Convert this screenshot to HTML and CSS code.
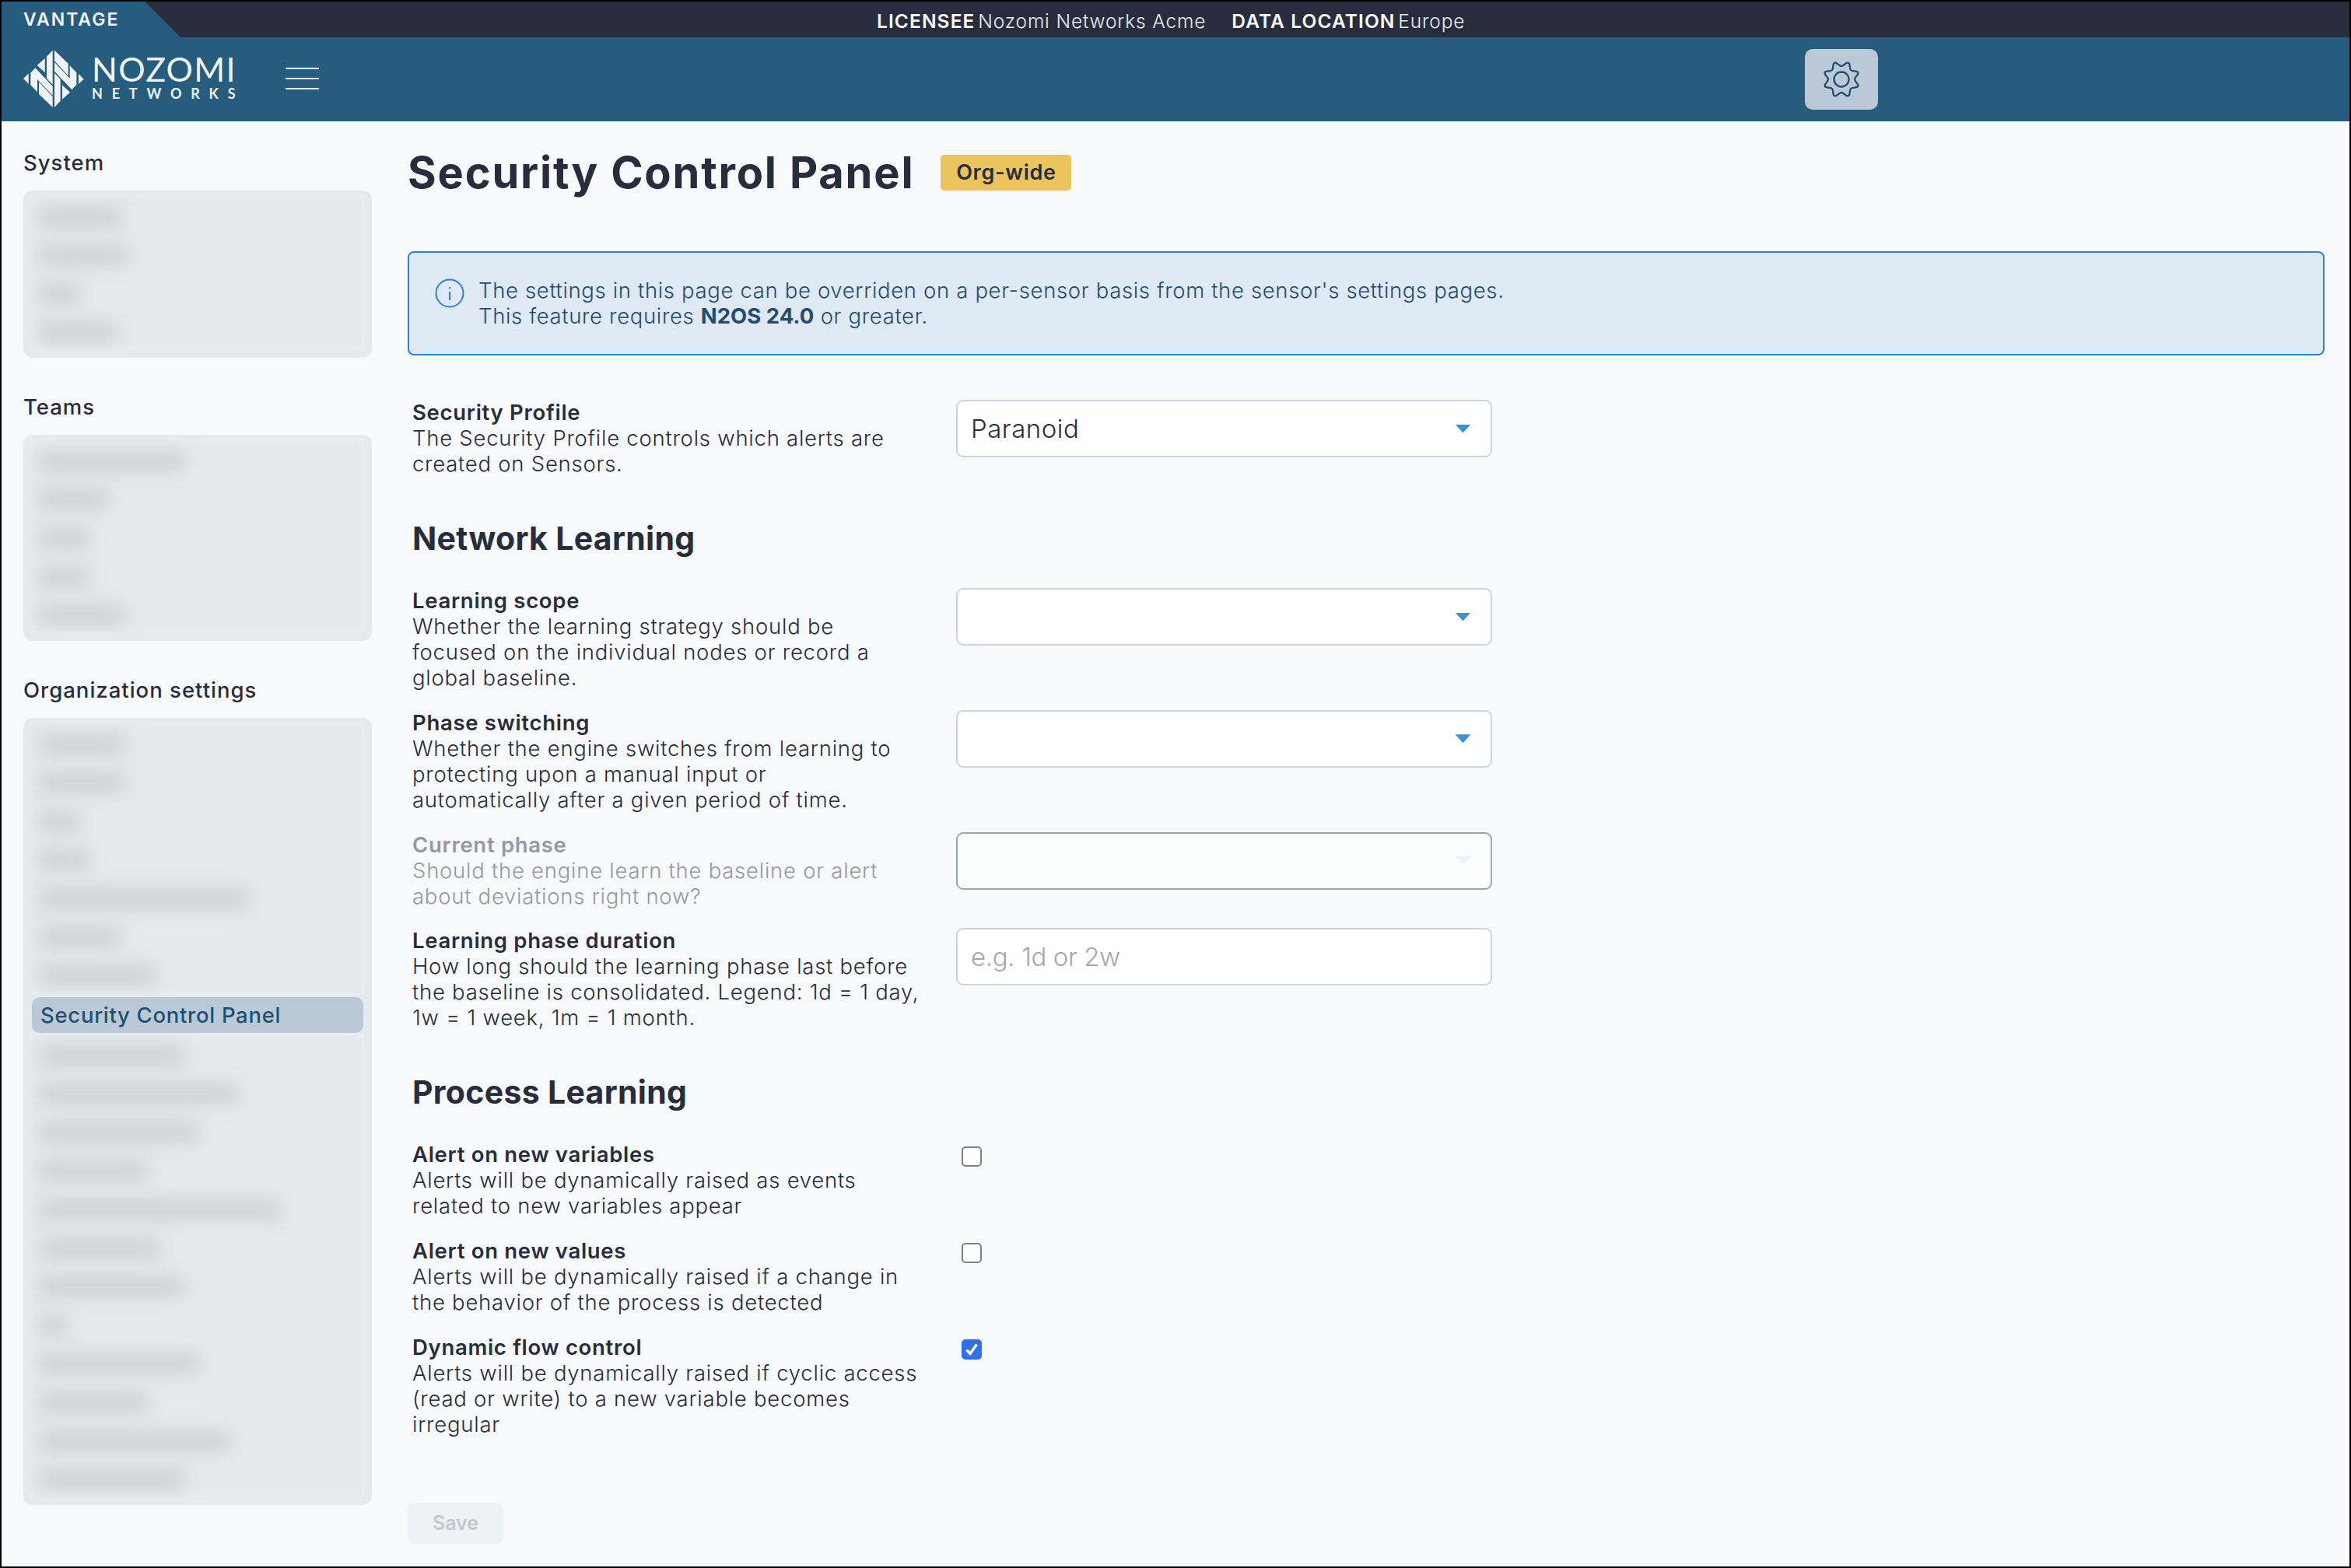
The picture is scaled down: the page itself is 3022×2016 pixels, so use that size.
FILE: index.html
```html
<!DOCTYPE html>
<html lang="en">
<head>
<meta charset="utf-8">
<title>Security Control Panel</title>
<link rel="stylesheet" href="styles.css">
</head>
<body>
<div class="frame">
  <div class="topbar">
    <div class="vantage">VANTAGE</div>
    <div class="licence">
      <span><b>LICENSEE</b> Nozomi Networks Acme</span>
      <span><b>DATA LOCATION</b> Europe</span>
    </div>
  </div>
  <header class="header">
    <div class="logo">
      <svg class="logo-mark" viewBox="30 24 234 225" aria-hidden="true">
        <g id="half" fill="#f0f4f8">
          <path d="M30 135 50 116V155Z"/>
          <path d="M143 26V158L120 135V50Z"/>
          <path d="M113 57V112L83 84Z"/>
          <path d="M58 113 76 94 143 165V200L84 138V187L58 160Z"/>
          <path d="M90 148 143 205V246L90 195Z"/>
        </g>
        <use href="#half" transform="rotate(180 146.500 136)"/>
      </svg>
      <div class="logo-text">
        <span class="logo-name">NOZOMI</span>
        <span class="logo-sub">NETWORKS</span>
      </div>
    </div>
    <div class="burger"><i></i><i></i><i></i></div>
    <div class="gear-btn">
      <svg viewBox="0 0 48 48" class="gear" aria-hidden="true">
        <path fill="none" stroke="#1f4f6e" stroke-width="2.300" d="M24 7C27.500 7 29.600 1.450 32.800 2.750C36 4.050 33.520 9.480 36.020 11.980C38.520 14.480 43.950 12 45.250 15.200C46.550 18.400 41 20.500 41 24C41 27.500 46.550 29.600 45.250 32.800C43.950 36 38.520 33.520 36.020 36.020C33.520 38.520 36 43.950 32.800 45.250C29.600 46.550 27.500 41 24 41C20.500 41 18.400 46.550 15.200 45.250C12 43.950 14.480 38.520 11.980 36.020C9.480 33.520 4.050 36 2.750 32.800C1.450 29.600 7 27.500 7 24C7 20.500 1.450 18.400 2.750 15.200C4.050 12 9.480 14.480 11.980 11.980C14.480 9.480 12 4.050 15.200 2.750C18.400 1.450 20.500 7 24 7Z"/>
        <circle cx="24" cy="24" r="9.500" fill="none" stroke="#1f4f6e" stroke-width="2.300"/>
      </svg>
    </div>
  </header>
  <div class="body">
    <aside class="sidebar">
      <section class="side-group">
        <h3 class="side-title">System</h3>
        <div class="side-panel">
          <div class="blur-block">
            <div class="blur-item w-105"></div>
            <div class="blur-item w-115"></div>
            <div class="blur-item w-52"></div>
            <div class="blur-item w-100"></div>
          </div>
        </div>
      </section>
      <section class="side-group">
        <h3 class="side-title">Teams</h3>
        <div class="side-panel">
          <div class="blur-block">
            <div class="blur-item w-187"></div>
            <div class="blur-item w-90"></div>
            <div class="blur-item w-65"></div>
            <div class="blur-item w-65"></div>
            <div class="blur-item w-110"></div>
          </div>
        </div>
      </section>
      <section class="side-group">
        <h3 class="side-title">Organization settings</h3>
        <div class="side-panel">
          <div class="blur-block block-top">
            <div class="blur-item w-110"></div>
            <div class="blur-item w-110"></div>
            <div class="blur-item w-52"></div>
            <div class="blur-item w-65"></div>
            <div class="blur-item w-270"></div>
            <div class="blur-item w-105"></div>
            <div class="blur-item w-150"></div>
          </div>
          <div class="side-active">Security Control Panel</div>
          <div class="blur-block block-bottom">
            <div class="blur-item w-187"></div>
            <div class="blur-item w-255"></div>
            <div class="blur-item w-205"></div>
            <div class="blur-item w-140"></div>
            <div class="blur-item w-310"></div>
            <div class="blur-item w-155"></div>
            <div class="blur-item w-187"></div>
            <div class="blur-item w-37"></div>
            <div class="blur-item w-205"></div>
            <div class="blur-item w-140"></div>
            <div class="blur-item w-245"></div>
            <div class="blur-item w-187"></div>
          </div>
        </div>
      </section>
    </aside>
    <main class="main">
      <div class="title-row">
        <h1 class="title">Security Control Panel</h1>
        <span class="badge">Org-wide</span>
      </div>
      <div class="alert">
        <svg class="alert-icon" viewBox="0 0 38 38" aria-hidden="true">
          <circle cx="19" cy="19" r="17.500" fill="none" stroke="#3182ce" stroke-width="2"/>
          <rect x="18" y="17" width="2" height="11" fill="#3182ce"/>
          <rect x="18" y="11" width="2" height="2.500" fill="#3182ce"/>
        </svg>
        <p class="alert-text">The settings in this page can be overriden on a per-sensor basis from the sensor's settings pages.<br>This feature requires <b>N2OS 24.0</b> or greater.</p>
      </div>
      <form class="form">
        <div class="row">
          <div class="lab"><strong>Security Profile</strong><br>The Security Profile controls which alerts are<br>created on Sensors.</div>
          <div class="control select"><span>Paranoid</span><i class="caret"></i></div>
        </div>
        <h2 class="section">Network Learning</h2>
        <div class="row">
          <div class="lab"><strong>Learning scope</strong><br>Whether the learning strategy should be<br>focused on the individual nodes or record a<br>global baseline.</div>
          <div class="control select"><i class="caret"></i></div>
        </div>
        <div class="row">
          <div class="lab"><strong>Phase switching</strong><br>Whether the engine switches from learning to<br>protecting upon a manual input or<br>automatically after a given period of time.</div>
          <div class="control select"><i class="caret"></i></div>
        </div>
        <div class="row disabled">
          <div class="lab"><strong>Current phase</strong><br>Should the engine learn the baseline or alert<br>about deviations right now?</div>
          <div class="control select"><i class="caret"></i></div>
        </div>
        <div class="row">
          <div class="lab"><strong>Learning phase duration</strong><br>How long should the learning phase last before<br>the baseline is consolidated. Legend: 1d = 1 day,<br>1w = 1 week, 1m = 1 month.</div>
          <div class="control input"><span>e.g. 1d or 2w</span></div>
        </div>
        <h2 class="section">Process Learning</h2>
        <div class="row">
          <div class="lab"><strong>Alert on new variables</strong><br>Alerts will be dynamically raised as events<br>related to new variables appear</div>
          <div class="check"></div>
        </div>
        <div class="row">
          <div class="lab"><strong>Alert on new values</strong><br>Alerts will be dynamically raised if a change in<br>the behavior of the process is detected</div>
          <div class="check"></div>
        </div>
        <div class="row">
          <div class="lab"><strong>Dynamic flow control</strong><br>Alerts will be dynamically raised if cyclic access<br>(read or write) to a new variable becomes<br>irregular</div>
          <div class="check on">
            <svg viewBox="0 0 26 26" aria-hidden="true"><path d="M6.500 13.500 11 18.500 19.500 6.500" fill="none" stroke="#fff" stroke-width="3.400"/></svg>
          </div>
        </div>
        <div class="save">Save</div>
      </form>
    </main>
  </div>
</div>
</body>
</html>
```
FILE: styles.css
```css
* { box-sizing: border-box; }
html, body { margin: 0; padding: 0; }
body {
  width: 3022px;
  height: 2016px;
  overflow: hidden;
  font-family: Inter, "Noto Sans", sans-serif;
  color: #272d3d;
}
.frame {
  width: 3022px;
  height: 2016px;
  border: 2px solid #000;
  background: #f7f9fb;
  display: flex;
  flex-direction: column;
}
.topbar {
  height: 46px;
  background: #272d3d;
  display: flex;
  position: relative;
  color: #e8edf2;
}
.vantage {
  width: 230px;
  height: 46px;
  background: #265c7e;
  clip-path: polygon(0 0, 184px 0, 230px 46px, 0 46px);
  color: #f0f4f8;
  font-size: 23px;
  font-weight: 600;
  letter-spacing: 2px;
  line-height: 46px;
  padding-left: 28px;
}
.licence {
  position: absolute;
  left: 1125px;
  top: 0;
  display: flex;
  gap: 33px;
  font-size: 24.500px;
  letter-spacing: 0.850px;
  line-height: 50px;
  white-space: nowrap;
  font-weight: 350;
}
.licence b { font-weight: 600; color: #f7f9fb; letter-spacing: 1.100px; margin-right: -4px; }
.header {
  height: 108px;
  background: #265c7e;
  display: flex;
  align-items: center;
  padding-left: 28px;
  position: relative;
}
.logo { display: flex; align-items: center; gap: 10px; width: 337px; }
.logo-mark { width: 78px; height: 75px; flex: none; margin-top: -1px; }
.logo-text { display: flex; flex-direction: column; color: #f0f4f8; margin-top: -4px; }
.logo-name { font-family: Lato, sans-serif; font-size: 43px; line-height: 40px; font-weight: 400; letter-spacing: 1.300px; }
.logo-sub { font-family: Lato, sans-serif; font-size: 18px; line-height: 22px; font-weight: 700; letter-spacing: 11.800px; white-space: nowrap; }
.burger { width: 43px; display: flex; flex-direction: column; gap: 10.500px; margin-top: -2px; }
.burger i { display: block; height: 2.500px; background: #f0f4f8; }
.gear-btn {
  position: absolute;
  left: 2318px;
  top: 15px;
  width: 94px;
  height: 78px;
  background: #bbc9d7;
  border-radius: 10px;
  display: flex;
  align-items: center;
  justify-content: center;
}
.gear { width: 48px; height: 48px; display: block; }
.body { display: flex; flex: 1; min-height: 0; }
.sidebar { width: 522px; flex: none; padding: 31px 0 0 28px; }
.side-title { margin: 0 0 14px; font-size: 27.500px; letter-spacing: 1px; line-height: 44px; font-weight: 500; color: #272d3d; }
.side-group { margin-bottom: 41px; width: 448px; }
.side-panel {
  background: #e5eaee;
  border-radius: 12px;
  padding: 5px 10px 10px 8px;
  display: flex;
  flex-direction: column;
}
.blur-block {
  display: flex;
  flex-direction: column;
  gap: 3.600px;
  padding: 5.500px 0 0 3px;
  box-shadow: inset 0 0 10px #eef1f4;
  overflow: hidden;
}
.block-top { padding-bottom: 2px; }
.block-bottom { padding-top: 4.400px; }
.blur-item { height: 46px; position: relative; flex: none; }
.blur-item::before {
  content: "";
  position: absolute;
  left: 9px;
  top: 11px;
  height: 24px;
  background: #c9cfd5;
  filter: blur(12px);
}
.w-37::before { width: 37px; }
.w-52::before { width: 52px; }
.w-65::before { width: 65px; }
.w-90::before { width: 90px; }
.w-100::before { width: 100px; }
.w-105::before { width: 105px; }
.w-110::before { width: 110px; }
.w-115::before { width: 115px; }
.w-140::before { width: 140px; }
.w-150::before { width: 150px; }
.w-155::before { width: 155px; }
.w-187::before { width: 187px; }
.w-205::before { width: 205px; }
.w-245::before { width: 245px; }
.w-255::before { width: 255px; }
.w-270::before { width: 270px; }
.w-310::before { width: 310px; }
.side-active {
  height: 46px;
  margin: 3px 1px 1px 3px;
  background: #bbc9d7;
  border-radius: 10px;
  color: #1f5070;
  font-size: 27.500px;
  letter-spacing: 0.700px;
  font-weight: 500;
  line-height: 46px;
  padding-left: 11px;
  white-space: nowrap;
  flex: none;
}
.main { flex: 1; min-width: 0; padding: 40px 32px 0 0; }
.title-row { display: flex; align-items: center; gap: 34px; height: 52px; }
.title { margin: 0; font-size: 56px; line-height: 52px; font-weight: 700; letter-spacing: 1.800px; white-space: nowrap; }
.badge {
  background: #ecc45e;
  border-radius: 5px;
  width: 168px;
  height: 46px;
  font-size: 27px;
  font-weight: 600;
  letter-spacing: 0.700px;
  line-height: 46px;
  text-align: center;
  color: #272d3d;
}
.alert {
  margin-top: 75px;
  height: 134px;
  background: #dfe9f3;
  border: 2px solid #3182ce;
  border-radius: 8px;
  display: flex;
  align-items: center;
  padding-left: 33px;
  gap: 18px;
  color: #254c6e;
}
.alert-icon { width: 38px; height: 38px; flex: none; margin-bottom: 27px; }
.alert-text { margin: 0; font-size: 27.500px; letter-spacing: 0.650px; line-height: 33px; font-weight: 350; white-space: nowrap; }
.alert-text b { font-weight: 700; letter-spacing: 0; }
.form { padding-left: 6px; margin-top: 57px; display: flex; flex-direction: column; }
.row { display: flex; align-items: flex-start; margin-bottom: 24.750px; }
.lab { width: 699px; flex: none; font-size: 27.500px; letter-spacing: 0.750px; line-height: 33px; font-weight: 350; white-space: nowrap; color: #272d3d; }
.lab strong { font-weight: 600; letter-spacing: 0.700px; }
.control {
  width: 688.500px;
  height: 74px;
  background: #fff;
  border: 2px solid #c9d6e0;
  border-radius: 9px;
  display: flex;
  align-items: center;
  justify-content: space-between;
  padding: 0 25px 0 17px;
  font-size: 33px;
  letter-spacing: 0.500px;
  font-weight: 350;
  flex: none;
}
.caret { width: 20px; height: 11px; background: #3f91d0; clip-path: polygon(0 0, 100% 0, 50% 100%); margin-left: auto; }
.input span { color: #a2a8b2; letter-spacing: -0.400px; font-weight: 300; }
.disabled .lab { color: #9499a4; }
.disabled .control { background: #fbfcfd; border-color: #9ea5ae; }
.disabled .caret { background: #eff2f5; }
.section {
  margin: -24.750px 0 0;
  font-size: 41px;
  letter-spacing: 0.300px;
  line-height: 50px;
  font-weight: 700;
  height: 143px;
  padding-top: 54px;
}
.check {
  width: 26px;
  height: 26px;
  margin: 6px 0 0 7px;
  background: #fff;
  border: 2px solid #7c828c;
  border-radius: 5px;
  flex: none;
}
.check.on { background: #2f6ff0; border: none; }
.check svg { display: block; width: 26px; height: 26px; }
.save {
  width: 123px;
  height: 53px;
  margin: 59.500px 0 0 -6px;
  background: #eef1f5;
  border-radius: 9px;
  color: #c3c8ce;
  font-size: 25px;
  font-weight: 600;
  line-height: 53px;
  text-align: center;
}
```
